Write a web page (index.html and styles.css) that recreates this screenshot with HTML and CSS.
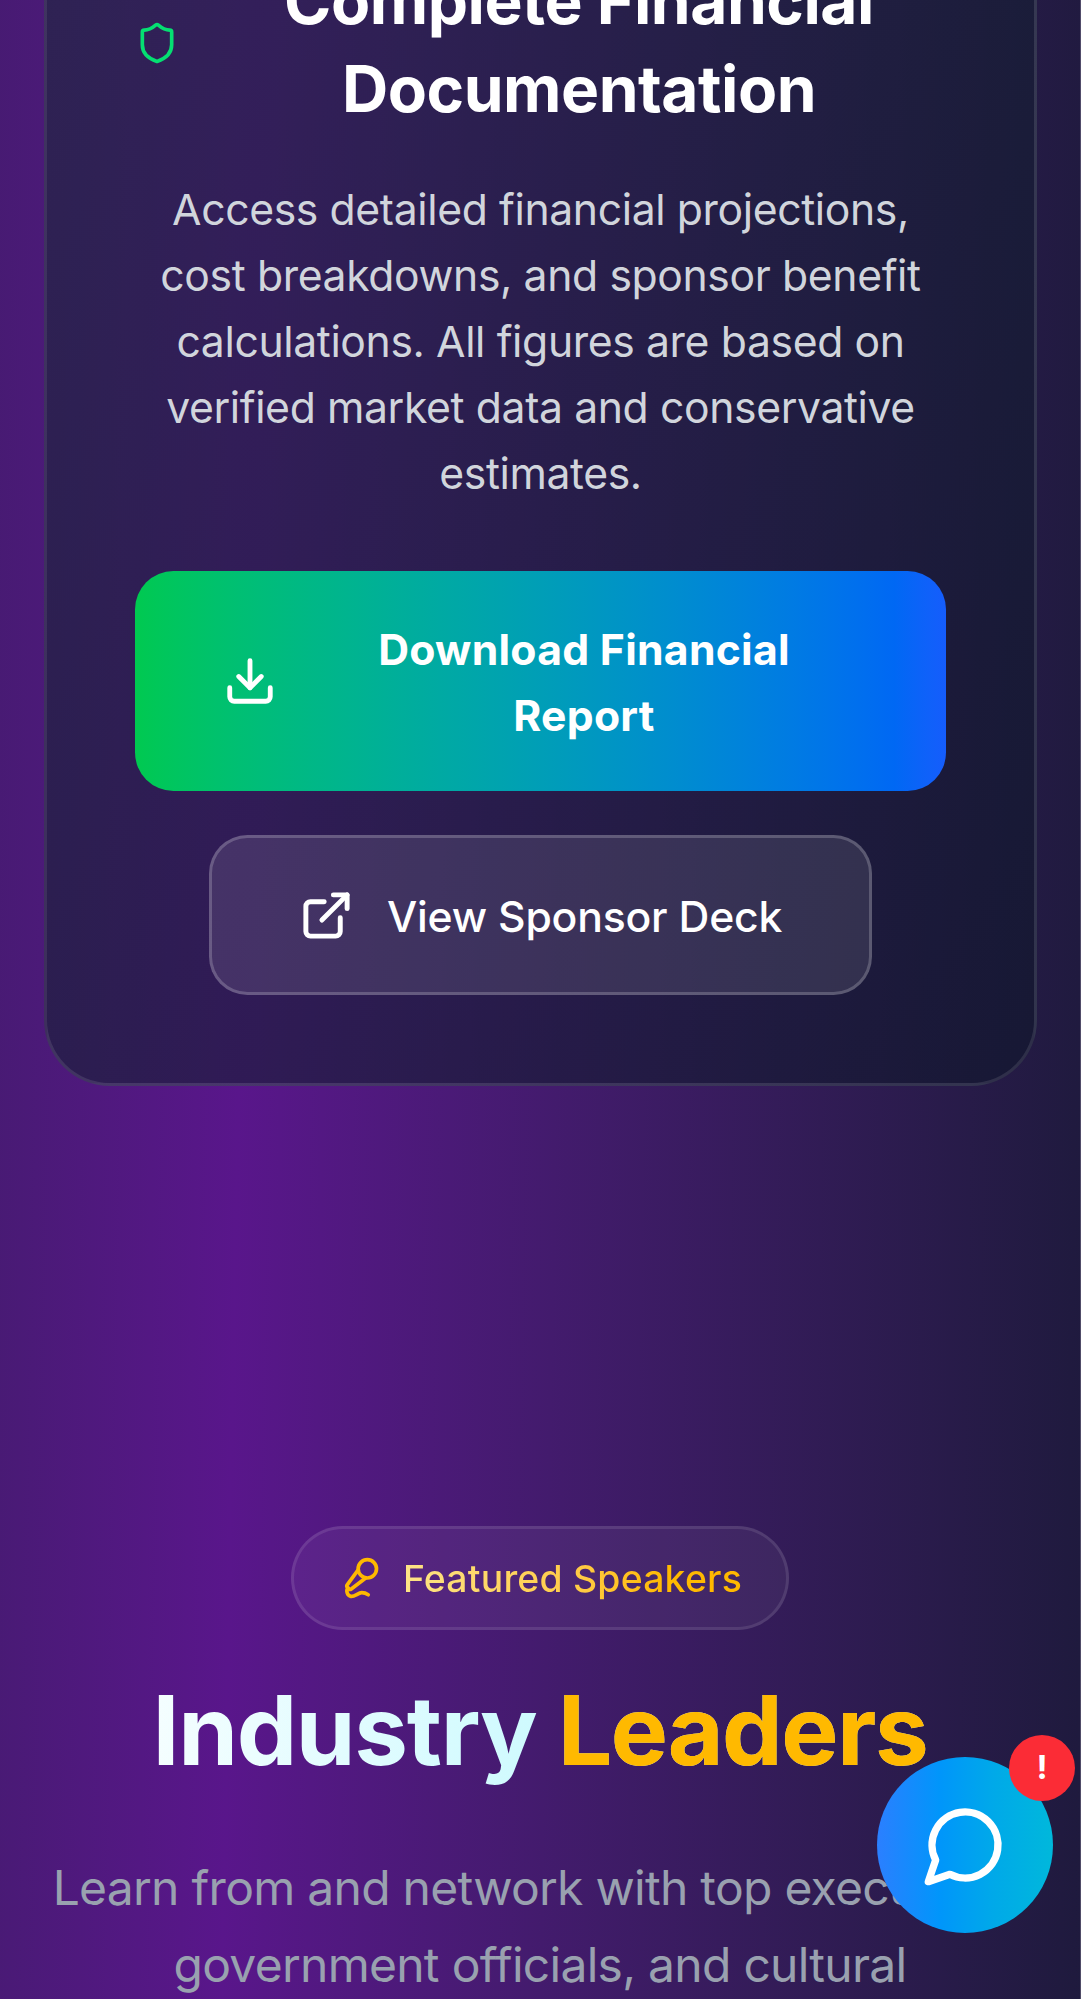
FILE: index.html
```html
<!DOCTYPE html>
<html lang="en">
<head>
<meta charset="utf-8">
<meta name="viewport" content="width=device-width, initial-scale=1">
<title>Sponsors and Speakers</title>
<link rel="stylesheet" href="styles.css">
</head>
<body>
<main class="page">
  <section class="card">
    <div class="card-head">
      <svg class="icon-shield" viewBox="0 0 24 24"><path d="M20 13c0 5-3.5 7.5-7.66 8.95a1 1 0 0 1-.67-.01C7.5 20.5 4 18 4 13V6a1 1 0 0 1 1-1c2 0 4.500-1.200 6.240-2.720a1.170 1.170 0 0 1 1.520 0C14.510 3.810 17 5 19 5a1 1 0 0 1 1 1z"/></svg>
      <h3 class="card-title">Complete Financial<br>Documentation</h3>
    </div>
    <p class="card-text">Access detailed financial projections,<br>cost breakdowns, and sponsor benefit<br>calculations. All figures are based on<br>verified market data and conservative<br>estimates.</p>
    <div class="actions">
      <a class="btn btn-primary">
        <svg class="icon-download" viewBox="0 0 24 24"><path d="M12 15V3"/><path d="M21 15v4a2 2 0 0 1-2 2H5a2 2 0 0 1-2-2v-4"/><path d="m7 10 5 5 5-5"/></svg>
        <span class="btn-label">Download Financial<br>Report</span>
      </a>
      <a class="btn btn-glass">
        <svg class="icon-link" viewBox="0 0 24 24"><path d="M15 3h6v6"/><path d="M10 14 21 3"/><path d="M18 13v6a2 2 0 0 1-2 2H5a2 2 0 0 1-2-2V8a2 2 0 0 1 2-2h6"/></svg>
        <span class="deck-label">View Sponsor Deck</span>
      </a>
    </div>
  </section>

  <section class="speakers">
    <div class="pill">
      <svg class="icon-mic" viewBox="0 0 24 24"><path d="m11 7.601-5.994 8.190a1 1 0 0 0 .1 1.298l.817.818a1 1 0 0 0 1.314.087L15.090 12"/><path d="M16.500 21.174C15.500 20.500 14.372 20 13 20c-2.058 0-3.928 2.356-6 2-2.072-.356-2.775-3.369-1.500-4.500"/><circle cx="16" cy="7" r="5"/></svg>
      <span class="pill-text">Featured Speakers</span>
    </div>
    <h2 class="title">Industry <span class="accent">Leaders</span></h2>
    <p class="lead">Learn from and network with top exec<span class="tight">utives,</span><br>government officials, and cultural</p>
  </section>
</main>

<button class="chat" aria-label="Chat">
  <svg class="icon-chat" viewBox="0 0 24 24"><path d="M7.900 20A9 9 0 1 0 4 16.100L2 22Z"/></svg>
  <span class="chat-badge">!</span>
</button>
</body>
</html>
```
FILE: styles.css
```css
* { box-sizing: border-box; margin: 0; padding: 0; }

html, body { height: 1999px; overflow: hidden; }

body {
  position: relative;
  font-family: Inter, "Liberation Sans", sans-serif;
  background: linear-gradient(91deg in oklab, #0f172b -824px, #59168b 257px, #0f172b 1338px);
}

svg {
  fill: none;
  stroke: currentColor;
  stroke-width: 2;
  stroke-linecap: round;
  stroke-linejoin: round;
  flex-shrink: 0;
}

.page {
  height: 1999px;
  overflow: hidden;
  border-right: 1px solid rgba(255, 255, 255, .22);
}

.card {
  margin: -135px 44px 0;
  width: 993px;
  padding: 87px 88px 88px;
  border: 3px solid rgba(255, 255, 255, .1);
  border-radius: 66px;
  background: linear-gradient(to bottom right in oklab, rgba(29, 41, 61, .6), rgba(15, 23, 43, .6));
}

.card-head { display: flex; align-items: center; gap: 33px; margin-bottom: 44px; }
.icon-shield { width: 44px; height: 44px; color: #05df72; }
.card-title {
  flex: 1;
  padding-top: 2px;
  margin-bottom: -2px;
  font-size: 64px;
  line-height: 88px;
  font-weight: 700;
  letter-spacing: -.46px;
  color: #fff;
  text-align: center;
}

.card-text {
  padding-top: 2px;
  margin-bottom: 64px;
  font-size: 42.7px;
  line-height: 66px;
  letter-spacing: -.38px;
  color: #d1d5dc;
  text-align: center;
  white-space: nowrap;
}

.actions { display: flex; flex-direction: column; align-items: center; gap: 44px; }

.btn {
  display: flex;
  align-items: center;
  gap: 33px;
  border-radius: 38.5px;
  font-size: 42.7px;
  line-height: 66px;
  color: #fff;
  white-space: nowrap;
}
.icon-download { width: 54px; height: 54px; stroke-width: 2.15; }
.icon-link { width: 55px; height: 55px; stroke-width: 2.15; }
.btn-label, .deck-label { padding-top: 2px; margin-bottom: -2px; }

.btn-primary {
  width: 100%;
  padding: 44px 88px;
  font-weight: 700;
  background: linear-gradient(to right in oklab, #00c950, #155dfc);
}
.btn-label { flex: 1; text-align: center; letter-spacing: .27px; }

.btn-glass {
  padding: 44px 87px;
  border: 3px solid rgba(255, 255, 255, .2);
  font-weight: 500;
  letter-spacing: -.2px;
  background: rgba(255, 255, 255, .1);
}

.speakers {
  display: flex;
  flex-direction: column;
  align-items: center;
  padding-top: 440px;
}

.pill {
  display: flex;
  align-items: center;
  gap: 21px;
  height: 104px;
  padding: 0 44px;
  border: 3px solid rgba(255, 255, 255, .1);
  border-radius: 52px;
  background: rgba(255, 255, 255, .05);
}
.icon-mic { width: 44px; height: 44px; color: #ffb900; }
.pill-text {
  font-size: 37.4px;
  line-height: 55px;
  font-weight: 500;
  letter-spacing: .2px;
  color: transparent;
  background: linear-gradient(to right, #fee487, #ffcb45 52%, #ffb900 78%);
  -webkit-background-clip: text;
  background-clip: text;
}

.title {
  width: 993px;
  margin-top: 45px;
  font-size: 96px;
  line-height: 110px;
  font-weight: 700;
  letter-spacing: -1.3px;
  text-align: center;
  white-space: nowrap;
  color: transparent;
  background: linear-gradient(to right in oklab, #fff, #cefafe 50%, #bedbff);
  -webkit-background-clip: text;
  background-clip: text;
}
.accent { color: #ffb900; }

.lead {
  margin-top: 64px;
  font-size: 48px;
  line-height: 77px;
  letter-spacing: -.72px;
  color: #99a1af;
  text-align: center;
  white-space: nowrap;
}
.tight { letter-spacing: -2.5px; margin-right: 7px; }

.chat {
  position: absolute;
  left: 877px;
  top: 1757px;
  display: flex;
  align-items: center;
  justify-content: center;
  width: 176px;
  height: 176px;
  border: 0;
  border-radius: 50%;
  color: #fff;
  background: linear-gradient(to right, #2b7fff, #0096fa 36%, #00a9e9 66%, #00b8db);
}
.icon-chat { width: 88px; height: 88px; }
.chat-badge {
  position: absolute;
  top: -22px;
  right: -22px;
  width: 66px;
  height: 66px;
  border-radius: 50%;
  background: #fb2c36;
  font: 700 33px/65px Inter, sans-serif;
  text-align: center;
}
```
